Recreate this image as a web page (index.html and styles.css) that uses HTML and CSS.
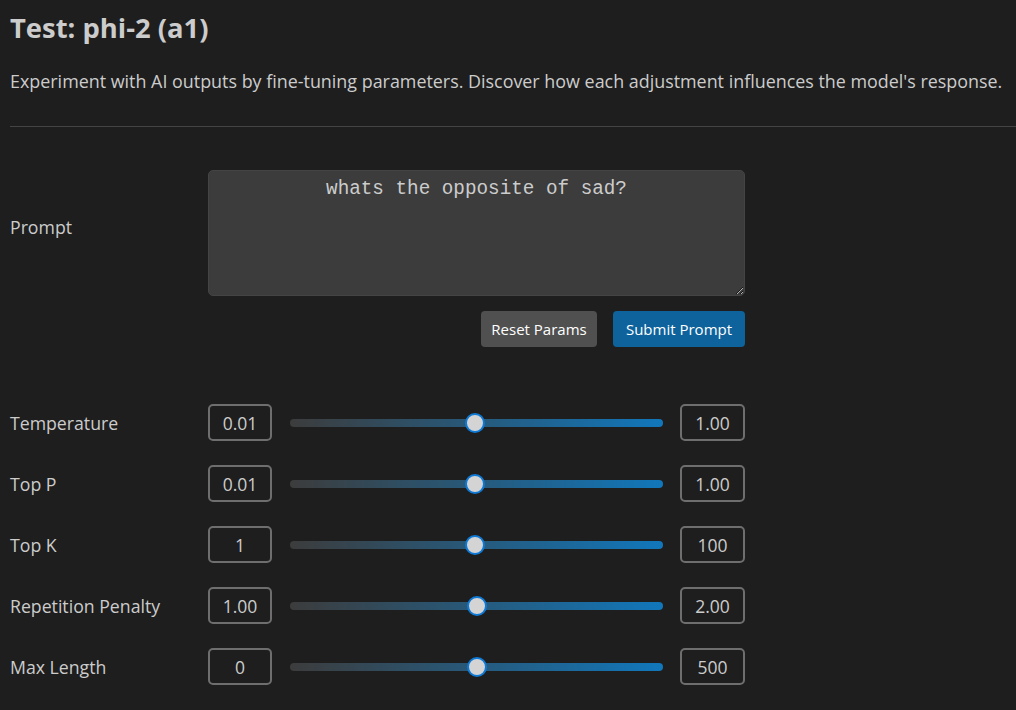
FILE: index.html
```html
<!DOCTYPE html>
<html>
<head>
<meta charset="utf-8">
<link rel="stylesheet" href="styles.css">
</head>
<body>
<h1 class="title">Test: phi-2 (a1)</h1>
<p class="desc">Experiment with AI outputs by fine-tuning parameters. Discover how each adjustment influences the model's response.</p>
<hr class="rule">
<div class="form">
  <div class="row prompt-row">
    <label class="label prompt-label">Prompt</label>
    <div class="field">
      <textarea class="prompt">whats the opposite of sad?</textarea>
      <div class="actions">
        <button class="btn btn-reset">Reset Params</button>
        <button class="btn btn-submit">Submit Prompt</button>
      </div>
    </div>
  </div>
  <div class="sliders">
    <div class="row slider-row">
      <label class="label">Temperature</label>
      <div class="control">
        <input class="num" value="0.01">
        <input class="range" type="range" min="0.01" max="1" step="0.01" value="0.5">
        <input class="num" value="1.00">
      </div>
    </div>
    <div class="row slider-row">
      <label class="label">Top P</label>
      <div class="control">
        <input class="num" value="0.01">
        <input class="range" type="range" min="0.01" max="1" step="0.01" value="0.5">
        <input class="num" value="1.00">
      </div>
    </div>
    <div class="row slider-row">
      <label class="label">Top K</label>
      <div class="control">
        <input class="num" value="1">
        <input class="range" type="range" min="1" max="100" step="1" value="50">
        <input class="num" value="100">
      </div>
    </div>
    <div class="row slider-row">
      <label class="label">Repetition Penalty</label>
      <div class="control">
        <input class="num" value="1.00">
        <input class="range" type="range" min="1" max="2" step="0.01" value="1.5">
        <input class="num" value="2.00">
      </div>
    </div>
    <div class="row slider-row">
      <label class="label">Max Length</label>
      <div class="control">
        <input class="num" value="0">
        <input class="range" type="range" min="0" max="500" step="1" value="250">
        <input class="num" value="500">
      </div>
    </div>
  </div>
</div>
</body>
</html>
```

FILE: styles.css
```css
html, body {
  margin: 0;
  padding: 0;
  background: #1e1e1e;
}
body {
  padding: 0 0 0 10px;
  color: #cccccc;
  font-family: "Open Sans", "Noto Sans", sans-serif;
  font-size: 17px;
  overflow: hidden;
}
.title {
  margin: 12px 0 0 0;
  font-size: 27.4px;
  line-height: 32px;
  font-weight: 700;
  color: #cccccc;
}
.desc {
  margin: 24px 0 0 0;
  line-height: 26px;
  font-size: 17.9px;
  white-space: nowrap;
}
.rule {
  margin: 32px 0 0 0;
  border: 0;
  border-top: 1px solid #444444;
  height: 0;
}
.form {
  margin-top: 43px;
}
.row {
  display: grid;
  grid-template-columns: 198px 537px;
  align-items: center;
}
.label {
  font-size: 17.7px;
  color: #cccccc;
}
.prompt-row {
  align-items: start;
}
.prompt-label {
  margin-top: 45px;
}
.prompt {
  display: block;
  box-sizing: border-box;
  width: 537px;
  height: 126px;
  margin: 0;
  padding: 6px 8px;
  background: #3c3c3c;
  border: 1px solid #444444;
  border-radius: 5px;
  color: #cccccc;
  font-family: "Liberation Mono", "Courier New", monospace;
  font-size: 19.3px;
  line-height: 24px;
  text-align: center;
  resize: both;
  outline: none;
}
.actions {
  display: flex;
  justify-content: flex-end;
  gap: 16px;
  margin-top: 15px;
}
.btn {
  height: 36px;
  border: 0;
  border-radius: 4px;
  color: #ffffff;
  font-family: "Open Sans", "Noto Sans", sans-serif;
  font-size: 15px;
  padding: 0;
  white-space: nowrap;
}
.btn-reset {
  width: 116px;
  background: #505050;
}
.btn-submit {
  width: 132px;
  background: #0e639c;
}
.sliders {
  margin-top: 57px;
  display: flex;
  flex-direction: column;
  gap: 24px;
}
.slider-row {
  height: 37px;
}
.control {
  display: flex;
  align-items: center;
}
.num {
  box-sizing: border-box;
  width: 64px;
  height: 37px;
  margin: 0;
  padding: 0;
  background: transparent;
  border: 2px solid #6e6e6e;
  border-radius: 5px;
  color: #cccccc;
  font-family: "Open Sans", "Noto Sans", sans-serif;
  font-size: 17.5px;
  text-align: center;
  outline: none;
}
.num:last-child {
  width: 65px;
}
.range {
  -webkit-appearance: none;
  appearance: none;
  width: 373px;
  height: 8px;
  margin: 0 17px 0 18px;
  padding: 0;
  border-radius: 4px;
  background: linear-gradient(to right, #3c3c3c, #1177bb);
  outline: none;
}
.range::-webkit-slider-thumb {
  -webkit-appearance: none;
  appearance: none;
  box-sizing: border-box;
  width: 20px;
  height: 20px;
  border-radius: 50%;
  background: #d4d4d4;
  border: 2px solid #0e7ad6;
}
```
